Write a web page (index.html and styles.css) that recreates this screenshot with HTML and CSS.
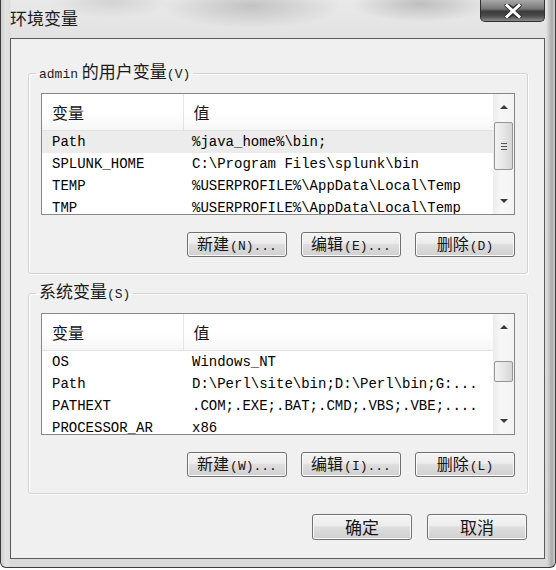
FILE: index.html
```html
<!DOCTYPE html>
<html lang="zh-CN">
<head>
  <meta charset="UTF-8">
  <title>环境变量</title>
  <link rel="stylesheet" href="styles.css">
</head>
<body>

<div class="window">
  <div class="titlebar">
    <span class="title">环境变量</span>
    <button class="close" aria-label="关闭">
      <svg width="18" height="14" viewBox="0 0 18 14">
        <path d="M3 1.5 L9 6 L15 1.5 M3 12.5 L9 8 L15 12.5" stroke="#2a2a2a" stroke-width="5" fill="none" stroke-linecap="round"/>
        <path d="M3 1.5 L15 12.5 M15 1.5 L3 12.5" stroke="#fff" stroke-width="3" fill="none" stroke-linecap="square"/>
      </svg>
    </button>
  </div>

  <div class="client">
    <fieldset class="group">
      <legend><span class="lat">admin</span> 的用户变量<span class="lat">(V)</span></legend>
      <div class="list">
        <div class="list-body">
          <table>
            <colgroup><col class="col-name"><col></colgroup>
            <tr><th>变量</th><th>值</th></tr>
            <tr class="selected"><td>Path</td><td>%java_home%\bin;</td></tr>
            <tr><td>SPLUNK_HOME</td><td>C:\Program Files\splunk\bin</td></tr>
            <tr><td>TEMP</td><td>%USERPROFILE%\AppData\Local\Temp</td></tr>
            <tr><td>TMP</td><td>%USERPROFILE%\AppData\Local\Temp</td></tr>
          </table>
        </div>
        <div class="scrollbar">
          <div class="arrow up"></div>
          <div class="track">
            <div class="thumb thumb-user"><span class="grip"></span></div>
          </div>
          <div class="arrow down"></div>
        </div>
      </div>
      <div class="btn-row">
        <button class="btn">新建<span class="lat">(N)...</span></button>
        <button class="btn">编辑<span class="lat">(E)...</span></button>
        <button class="btn">删除<span class="lat">(D)</span></button>
      </div>
    </fieldset>

    <fieldset class="group group-sys">
      <legend>系统变量<span class="lat">(S)</span></legend>
      <div class="list">
        <div class="list-body">
          <table>
            <colgroup><col class="col-name"><col></colgroup>
            <tr><th>变量</th><th>值</th></tr>
            <tr><td>OS</td><td>Windows_NT</td></tr>
            <tr><td>Path</td><td>D:\Perl\site\bin;D:\Perl\bin;G:...</td></tr>
            <tr><td>PATHEXT</td><td>.COM;.EXE;.BAT;.CMD;.VBS;.VBE;....</td></tr>
            <tr><td>PROCESSOR_AR</td><td>x86</td></tr>
          </table>
        </div>
        <div class="scrollbar">
          <div class="arrow up"></div>
          <div class="track">
            <div class="thumb thumb-sys"></div>
          </div>
          <div class="arrow down"></div>
        </div>
      </div>
      <div class="btn-row">
        <button class="btn">新建<span class="lat">(W)...</span></button>
        <button class="btn">编辑<span class="lat">(I)...</span></button>
        <button class="btn">删除<span class="lat">(L)</span></button>
      </div>
    </fieldset>

    <div class="dialog-buttons">
      <button class="btn btn-ok">确定</button>
      <button class="btn btn-cancel">取消</button>
    </div>
  </div>
</div>

</body>
</html>
```

FILE: styles.css
```css
body {
  margin: 0;
  background: #fff;
  font-family: "Noto Sans CJK SC", "Liberation Sans", sans-serif;
  color: #151515;
}
.window {
  width: 556px;
  height: 568px;
  box-sizing: border-box;
  padding: 0 10px 0 9px;
  border: 1px solid #3c3c3c;
  border-top: none;
  border-radius: 0 0 6px 6px;
  background:
    radial-gradient(ellipse 90px 22px at 250px 6px, rgba(150,150,150,0.45), transparent),
    radial-gradient(ellipse 70px 18px at 420px 4px, rgba(140,140,140,0.45), transparent),
    radial-gradient(ellipse 60px 16px at 110px 2px, rgba(170,170,170,0.35), transparent),
    linear-gradient(to right, #cfcfcf 0, #e4e4e4 5px, #dcdcdc 9px, transparent 10px, transparent 545px, #d8d8d8 546px, #a9a9a9 551px, #cfcfcf 554px),
    linear-gradient(to bottom, #e9e9e9 0, #e2e2e2 38px, #d9d9d9 100%);
}
.titlebar {
  height: 38px;
  display: flex;
  align-items: flex-start;
}
.title {
  font-size: 17px;
  line-height: 20px;
  margin-top: 8px;
  color: #1e1e1e;
}
.close {
  margin-left: auto;
  width: 65px;
  height: 22px;
  padding: 0;
  border: 1px solid #2f2f2f;
  border-top: none;
  border-radius: 0 0 5px 5px;
  background: linear-gradient(to bottom, #a8a8a8 0, #7a7a7a 40%, #3c3c3c 55%, #4a4a4a 75%, #8a8a8a 100%);
  display: flex;
  align-items: center;
  justify-content: center;
}
.client {
  height: 521px;
  box-sizing: border-box;
  border: 1px solid #5a5a5a;
  background: #f0f0f0;
  padding: 22px 16px 0 17px;
}
.lat {
  font-family: "Liberation Mono", monospace;
  font-size: 13px;
}
.group {
  margin: 0;
  min-width: 0;
  padding: 8px 12px 16px 12px;
  border: 1px solid #d3d3d3;
  border-radius: 3px;
  box-shadow: inset 1px 1px 0 #fff, 1px 1px 0 #fff;
}
.group-sys {
  margin-top: 7px;
}
.group legend {
  margin-left: -5px;
  padding: 0 3px;
  font-size: 17px;
  line-height: 20px;
  color: #1a1a1a;
}
.list {
  height: 122px;
  box-sizing: border-box;
  border: 1px solid #878787;
  background: #fff;
  display: flex;
}
.list-body {
  flex: 1;
  overflow: hidden;
}
.list table {
  width: 100%;
  border-collapse: collapse;
  table-layout: fixed;
}
.col-name {
  width: 141px;
}
.list th {
  height: 36px;
  padding: 0 0 0 10px;
  text-align: left;
  font-weight: normal;
  font-size: 16px;
  border-bottom: 1px solid #e2e2e2;
  background: linear-gradient(to bottom, #fff 0, #fff 55%, #f6f6f6 100%);
}
.list th:first-child {
  border-right: 1px solid #e4e4e4;
}
.list td {
  height: 22px;
  padding: 0 0 0 10px;
  font-family: "Liberation Mono", monospace;
  font-size: 14px;
  line-height: 22px;
  color: #000;
  white-space: nowrap;
  overflow: hidden;
}
.list td + td {
  padding-left: 9px;
}
.list tr.selected td {
  background: #ececec;
}
.scrollbar {
  width: 21px;
  display: flex;
  flex-direction: column;
  background: linear-gradient(to right, #ececec, #f7f7f7 40%, #f3f3f3);
}
.arrow {
  height: 26px;
  display: flex;
  align-items: center;
  justify-content: center;
}
.arrow::before {
  content: "";
  width: 0;
  height: 0;
  border-left: 4px solid transparent;
  border-right: 4px solid transparent;
}
.arrow.up::before {
  border-bottom: 4px solid #3a3a3a;
}
.arrow.down::before {
  border-top: 4px solid #3a3a3a;
}
.track {
  flex: 1;
  padding: 0 1px;
}
.thumb {
  box-sizing: border-box;
  border: 1px solid #959595;
  border-radius: 2px;
  background: linear-gradient(to right, #f3f3f3, #e6e6e6 50%, #d6d6d6);
  display: flex;
  align-items: center;
  justify-content: center;
}
.thumb-user {
  margin-top: 2px;
  height: 48px;
}
.thumb-sys {
  margin-top: 21px;
  height: 21px;
}
.grip {
  width: 6px;
  height: 5px;
  border-top: 1px solid #555;
  border-bottom: 1px solid #555;
  background: linear-gradient(#555, #555) center / 100% 1px no-repeat;
}
.btn-row {
  display: flex;
  justify-content: flex-end;
  gap: 14px;
  margin-top: 17px;
}
.btn {
  width: 100px;
  height: 25px;
  padding: 0;
  border: 1px solid #707070;
  border-radius: 3px;
  background: linear-gradient(to bottom, #f4f4f4 0, #ececec 45%, #dedede 50%, #d0d0d0 100%);
  box-shadow: inset 0 0 0 1px #fbfbfb;
  font-family: "Noto Sans CJK SC", sans-serif;
  font-size: 16px;
  line-height: 20px;
  color: #151515;
}
.btn .lat {
  margin-left: 1px;
}
.dialog-buttons {
  display: flex;
  justify-content: flex-end;
  gap: 15px;
  margin-top: 20px;
  padding-right: 1px;
}
.btn-ok,
.btn-cancel {
  width: 100px;
  height: 26px;
  font-size: 17px;
}
```
